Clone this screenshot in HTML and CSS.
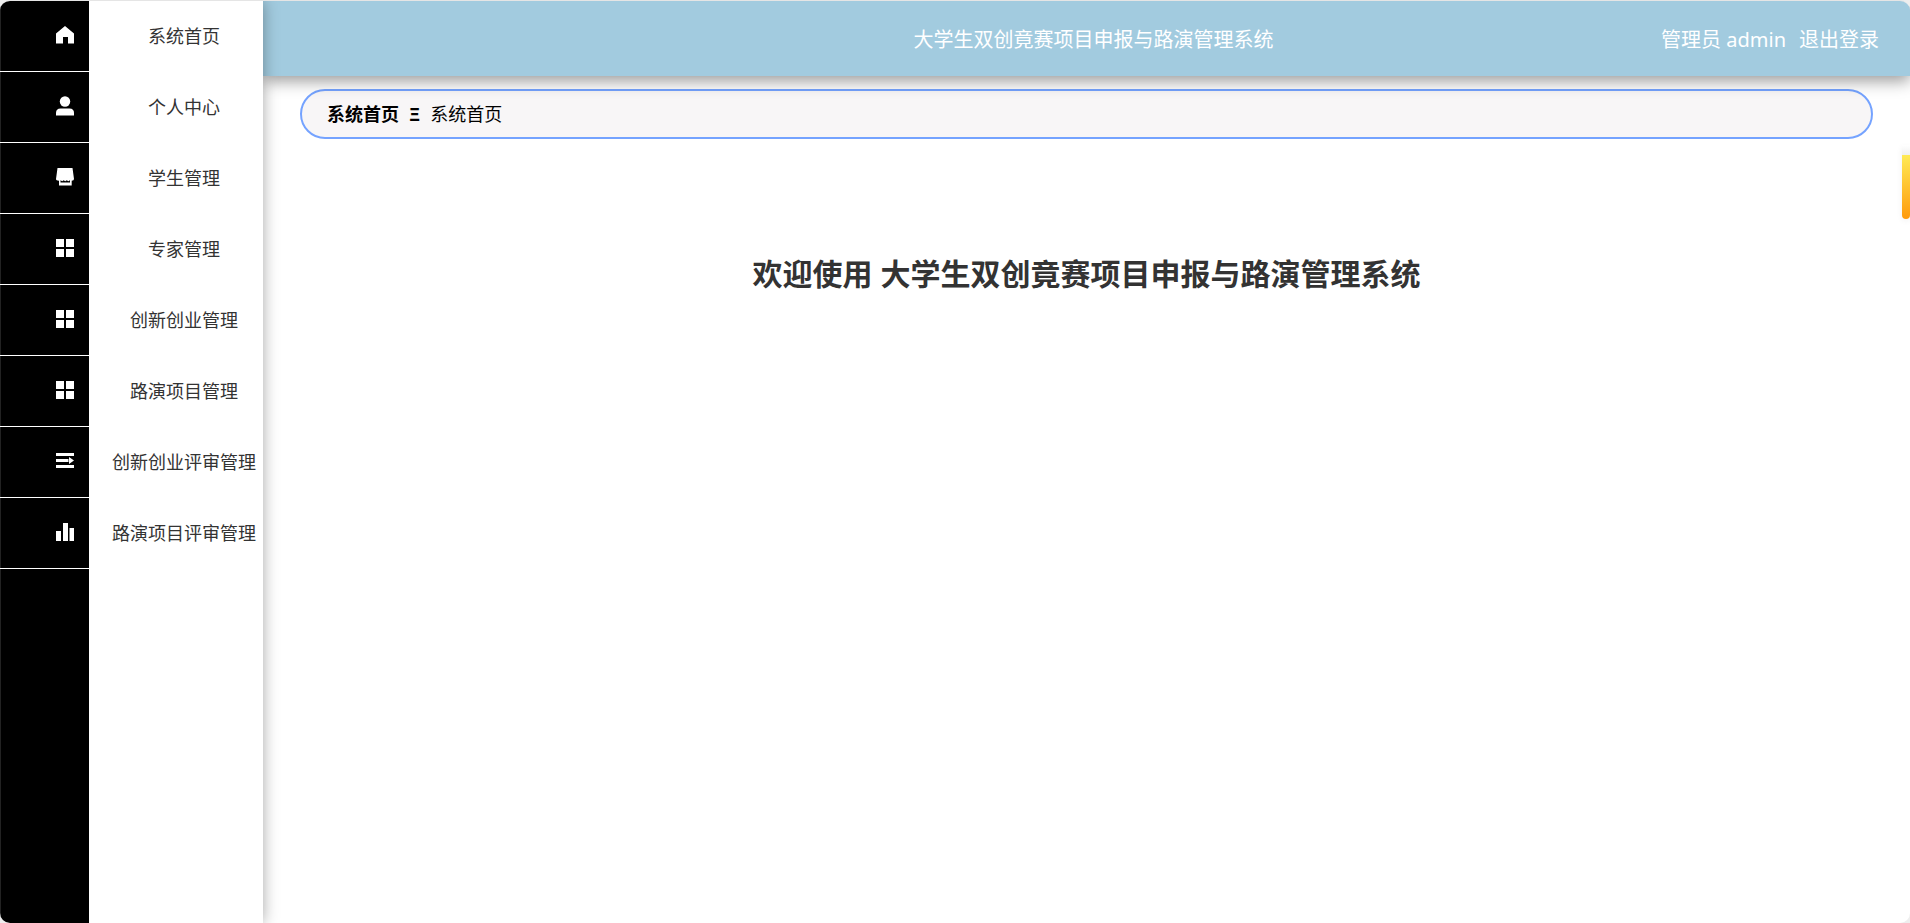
FILE: index.html
```html
<!DOCTYPE html>
<html lang="zh-CN">
<head>
    <meta charset="UTF-8">
    <title>大学生双创竟赛项目申报与路演管理系统</title>
    <link rel="stylesheet" href="styles.css">
</head>
<body>
<div class="app">
    <nav class="sidebar">
        <ul class="menu">
            <li><a href="#">
                <span class="icon"><svg viewBox="0 0 18 18"><path d="M9 0L18 7.500V17.500H12V11H7V17.500H0V7.500Z"/></svg></span>
                <span class="label">系统首页</span>
            </a></li>
            <li><a href="#">
                <span class="icon"><svg viewBox="0 0 18 18"><circle cx="9" cy="4.500" r="5.200"/><path d="M0 18.500V16Q0 11.500 4.500 11.500H13.500Q18 11.500 18 16V18.500Z"/></svg></span>
                <span class="label">个人中心</span>
            </a></li>
            <li><a href="#">
                <span class="icon"><svg viewBox="0 0 18 18"><path d="M1.500 0H16.500L18 11Q18 12.700 15.700 12.700V17.500H3V12.700Q0 12.700 0 11ZM4.500 12.300V14.500H14V12.300L12.300 13.200L10.800 12.300L9.200 13.200L7.700 12.300L6.200 13.200Z" fill-rule="evenodd"/></svg></span>
                <span class="label">学生管理</span>
            </a></li>
            <li><a href="#">
                <span class="icon"><svg viewBox="0 0 18 18"><path d="M0 0H8V8H0ZM10 0H18V8H10ZM0 10H8V18H0ZM10 10H18V18H10Z"/></svg></span>
                <span class="label">专家管理</span>
            </a></li>
            <li><a href="#">
                <span class="icon"><svg viewBox="0 0 18 18"><path d="M0 0H8V8H0ZM10 0H18V8H10ZM0 10H8V18H0ZM10 10H18V18H10Z"/></svg></span>
                <span class="label">创新创业管理</span>
            </a></li>
            <li><a href="#">
                <span class="icon"><svg viewBox="0 0 18 18"><path d="M0 0H8V8H0ZM10 0H18V8H10ZM0 10H8V18H0ZM10 10H18V18H10Z"/></svg></span>
                <span class="label">路演项目管理</span>
            </a></li>
            <li><a href="#">
                <span class="icon"><svg viewBox="0 0 18 18"><path d="M0 1H18V4H0ZM0 7H12.500V10H0ZM13 5L18 8.500L13 12ZM0 13H18V16H0Z"/></svg></span>
                <span class="label">创新创业评审管理</span>
            </a></li>
            <li><a href="#">
                <span class="icon"><svg viewBox="0 0 18 18"><path d="M0 8H5V18H0ZM7 0H12V18H7ZM13.500 5H18V18H13.500Z"/></svg></span>
                <span class="label">路演项目评审管理</span>
            </a></li>
        </ul>
    </nav>
    <div class="content">
        <header class="header">
            <span class="title">大学生双创竟赛项目申报与路演管理系统</span>
            <div class="user">
                <span>管理员 admin</span>
                <a href="#">退出登录</a>
            </div>
        </header>
        <main class="main">
            <div class="breadcrumb">
                <a href="#">系统首页</a>
                <span class="separator">Ξ</span>
                <span>系统首页</span>
            </div>
            <h1 class="welcome">欢迎使用 大学生双创竟赛项目申报与路演管理系统</h1>
        </main>
    </div>
    <div class="handle"></div>
</div>
</body>
</html>
```
FILE: styles.css
```css
* {
    margin: 0;
    padding: 0;
    box-sizing: border-box;
}

body {
    background: #eee;
    font-family: "Noto Sans", "Noto Sans CJK SC", sans-serif;
    font-size: 18px;
    line-height: 26px;
    color: #333;
}

a {
    color: inherit;
    text-decoration: none;
}

.app {
    position: relative;
    display: flex;
    height: 100vh;
    border-top: 1px solid #e5e5e5;
    border-radius: 10px;
    background: #fff;
    overflow: hidden;
}

/* 左侧菜单: 黑色图标栏 + 白色文字 */
.sidebar {
    position: relative;
    z-index: 2;
    flex: none;
    width: 263px;
    background: linear-gradient(to right, #222 1px, #000 1px, #000 89px, #fff 89px);
    box-shadow: 0 0 15px rgba(0, 0, 0, 0.35);
}

.menu {
    list-style: none;
}

.menu a {
    display: flex;
    height: 71px;
}

.icon {
    display: flex;
    align-items: center;
    justify-content: flex-end;
    width: 89px;
    padding: 0 15px 2px 0;
    border-bottom: 1px solid #fff;
}

.icon svg {
    width: 18px;
    height: 18px;
    fill: #fff;
    overflow: visible;
}

.label {
    flex: 1;
    padding-left: 16px;
    line-height: 70px;
    text-align: center;
    white-space: nowrap;
}

.content {
    flex: 1;
    min-width: 0;
}

.header {
    position: relative;
    z-index: 1;
    display: grid;
    grid-template-columns: 1fr auto 1fr;
    align-items: center;
    height: 75px;
    padding: 2px 31px 0 45px;
    background: #a2cbdf;
    box-shadow: 0 5px 15px rgba(0, 0, 0, 0.4);
    color: #fff;
    font-size: 20px;
}

.title {
    grid-column: 2;
}

.user {
    display: flex;
    justify-content: flex-end;
    gap: 13px;
}

.main {
    padding: 13px 37px;
}

.breadcrumb {
    display: flex;
    align-items: center;
    gap: 10px;
    height: 50px;
    padding: 0 25px;
    border: 2px solid #75a3ff;
    border-radius: 25px;
    background: #f8f6f7;
    color: #000;
}

.breadcrumb a,
.separator {
    font-weight: bold;
}

.welcome {
    margin-top: 113px;
    font-size: 30px;
    line-height: 44px;
    text-align: center;
}

/* 右侧边缘的拉手 */
.handle {
    position: absolute;
    top: 144px;
    right: 0;
    width: 8px;
    height: 74px;
    border-radius: 0 0 4px 4px;
    background: linear-gradient(#fff, #f0f0f0 10px, #ffea55 10px, #ff9a0c);
    box-shadow: 0 2px 6px rgba(0, 0, 0, 0.06);
}
```
